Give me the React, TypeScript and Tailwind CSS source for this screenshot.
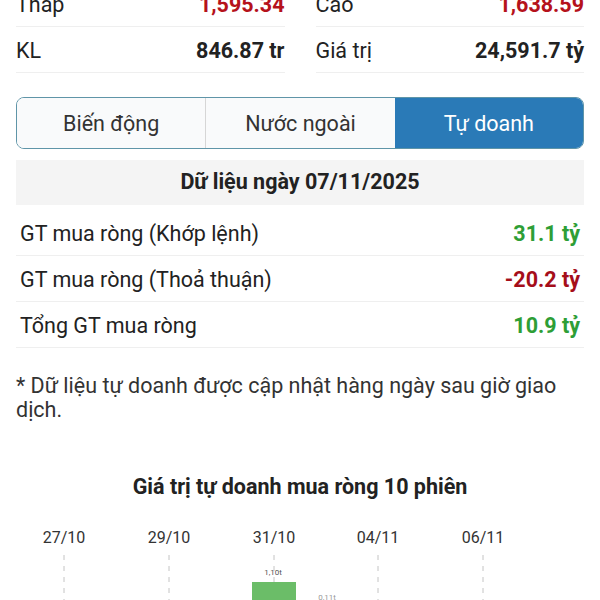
import React from 'react';

const stats = [
  { label: 'Thấp', value: '1,595.34', red: true },
  { label: 'Cao', value: '1,638.59', red: true },
  { label: 'KL', value: '846.87 tr', red: false },
  { label: 'Giá trị', value: '24,591.7 tỷ', red: false },
];

const rows = [
  { label: 'GT mua ròng (Khớp lệnh)', value: '31.1 tỷ', up: true },
  { label: 'GT mua ròng (Thoả thuận)', value: '-20.2 tỷ', up: false },
  { label: 'Tổng GT mua ròng', value: '10.9 tỷ', up: true },
];

const tabs = ['Biến động', 'Nước ngoài', 'Tự doanh'];

const ticks = [
  { x: 64, label: '27/10' },
  { x: 169, label: '29/10' },
  { x: 274, label: '31/10' },
  { x: 378, label: '04/11' },
  { x: 483, label: '06/11' },
];

const Chart = () => (
  <svg width="600" height="90" className="block">
    {ticks.map(t => (
      <g key={t.label}>
        <text x={t.x} y="33" textAnchor="middle" fontSize="16" fill="#333" fontFamily="Roboto, sans-serif">
          {t.label}
        </text>
        <line x1={t.x} y1="45" x2={t.x} y2="90" stroke="#c4c4c4" strokeWidth="1" strokeDasharray="5 6" />
      </g>
    ))}
    <rect x="252" y="72" width="44" height="30" fill="#6bbd68" />
    <text x="273" y="65" textAnchor="middle" fontSize="8" fill="#555" fontFamily="Roboto, sans-serif">1,10t</text>
    <text x="327" y="90" textAnchor="middle" fontSize="8" fill="#999" fontFamily="Roboto, sans-serif">0,11t</text>
  </svg>
);

export default function App() {
  return (
    <div className="w-[600px] h-[600px] overflow-hidden bg-white text-[#222] font-['Roboto',sans-serif]">
      {/* Index stats */}
      <div className="px-4 -mt-[19px] grid grid-cols-2 gap-x-[31px]">
        {stats.map(s => (
          <div key={s.label} className="h-[46px] pt-[3px] flex items-center justify-between border-b border-[#efefef] text-[21.5px]">
            <span>{s.label}</span>
            <span className={`font-bold ${s.red ? 'text-[#b5121b]' : 'text-[#222]'}`}>{s.value}</span>
          </div>
        ))}
      </div>

      {/* Tabs */}
      <div className="px-4 mt-6">
        <div className="h-[52px] flex rounded-[8px] overflow-hidden border-[1.5px] border-[#5f95a8]">
          {tabs.map((t, i) => (
            <div
              key={t}
              className={`flex-1 flex items-center justify-center pt-[3px] text-[21.5px] ${
                i === 2 ? 'bg-[#2a7ab7] text-white' : 'bg-[#f9fafb] text-[#333]'
              } ${i === 0 ? 'border-r border-[#d6d6d6]' : ''}`}
            >
              {t}
            </div>
          ))}
        </div>
      </div>

      {/* Daily data */}
      <div className="px-4 mt-[11px]">
        <div className="h-[45px] bg-[#f4f4f4] flex items-center justify-center font-bold text-[21.5px]">
          Dữ liệu ngày 07/11/2025
        </div>
        <div className="mt-[5px]">
          {rows.map(r => (
            <div key={r.label} className="h-[46px] px-1 pt-[3px] flex items-center justify-between border-b border-[#efefef] text-[21.5px]">
              <span>{r.label}</span>
              <span className={`font-bold ${r.up ? 'text-[#2e9e36]' : 'text-[#a50e1a]'}`}>{r.value}</span>
            </div>
          ))}
        </div>
        <p className="mt-[26px] text-[21.5px] leading-[24px] text-[#333]">
          * Dữ liệu tự doanh được cập nhật hàng ngày sau giờ giao dịch.
        </p>
      </div>

      {/* Chart */}
      <div className="mt-[53px] text-center font-bold text-[21.5px] leading-[24px]">
        Giá trị tự doanh mua ròng 10 phiên
      </div>
      <div className="mt-[11px]">
        <Chart />
      </div>
    </div>
  );
}
